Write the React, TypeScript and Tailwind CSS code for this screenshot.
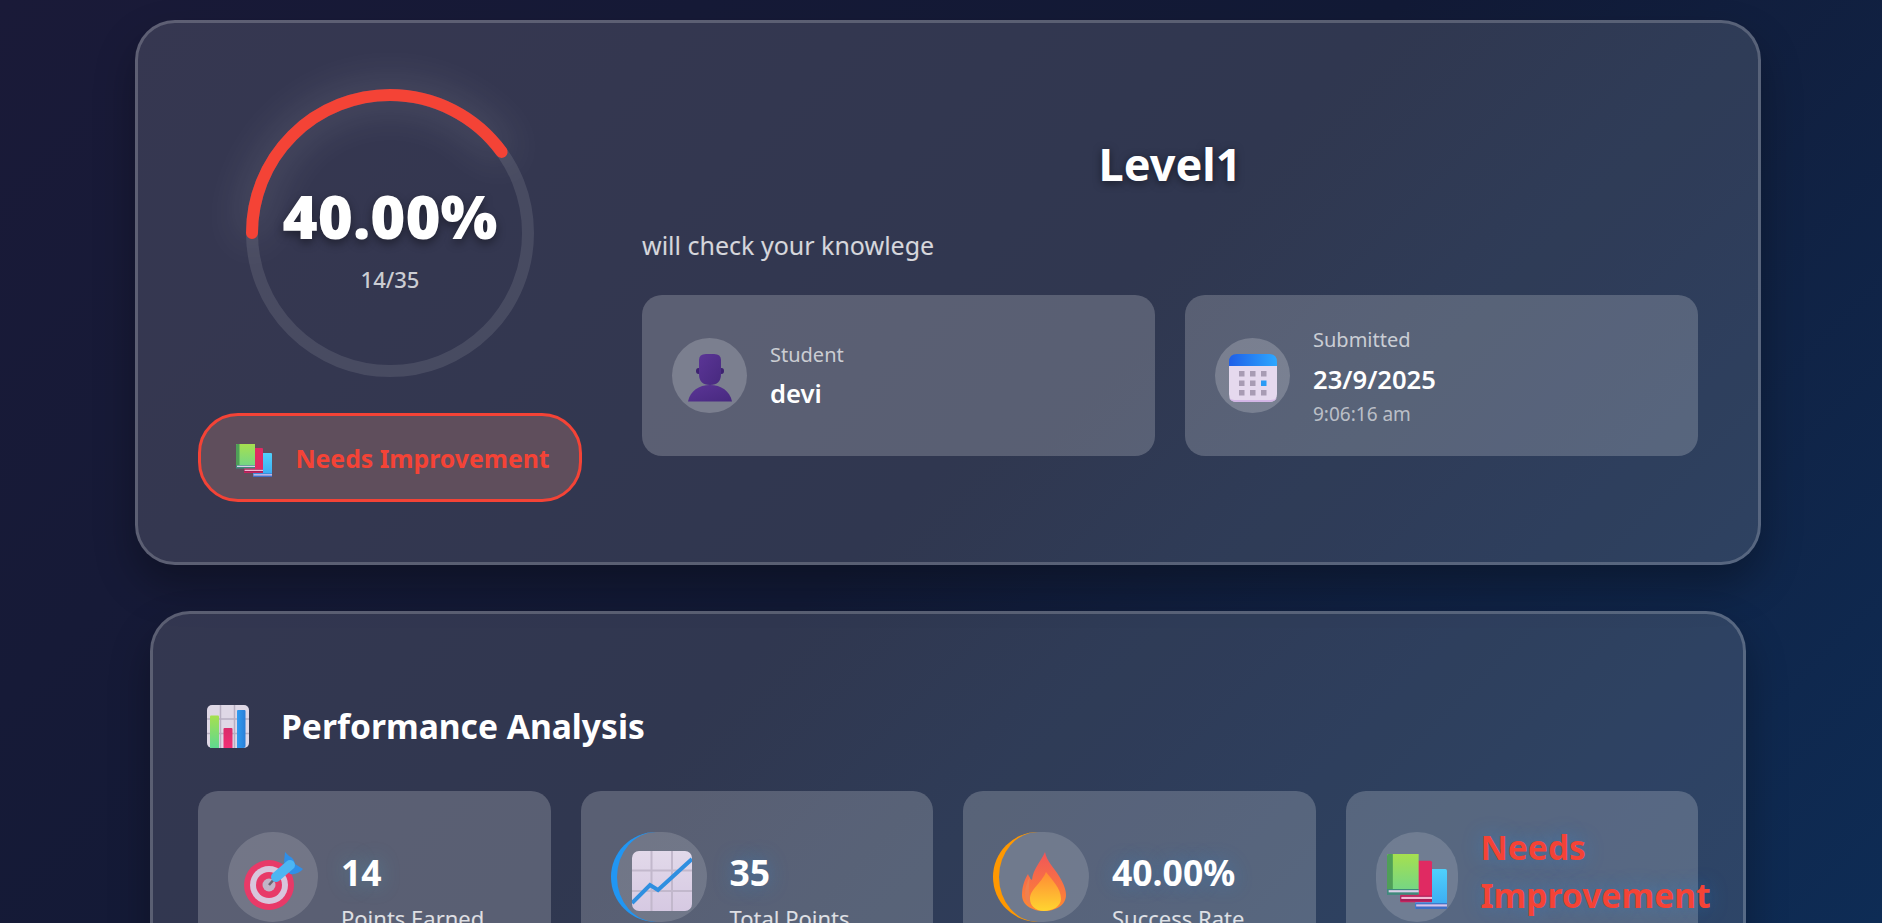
import React from 'react';

const BooksIcon: React.FC<{ id: string; className?: string }> = ({ id, className }) => (
    <svg viewBox="0 0 36 33" className={className}>
        <defs>
            <linearGradient id={`${id}-g`} x1="0" y1="0" x2="0" y2="1">
                <stop offset="0" stopColor="#a6e04f" />
                <stop offset="1" stopColor="#6fd58a" />
            </linearGradient>
            <linearGradient id={`${id}-b`} x1="0" y1="0" x2="0" y2="1">
                <stop offset="0" stopColor="#4fd0fb" />
                <stop offset="1" stopColor="#3aa8f2" />
            </linearGradient>
        </defs>
        <path d="M17 9.500q0-.5.5-.5H35q1 0 1 1V33H17z" fill={`url(#${id}-b)`} />
        <rect x="17" y="29.500" width="19" height="3.500" fill="#3f6fc4" />
        <rect x="17.500" y="30.200" width="18.500" height="1.300" fill="#d9c4ea" />
        <path d="M8 4h18q1 0 1 1v24H8z" fill="#e02a62" />
        <rect x="8" y="25" width="19" height="3.500" fill="#a81f58" />
        <rect x="8.600" y="25.700" width="18.400" height="1.300" fill="#f3b9d3" />
        <path d="M1 0h18v24H0V1q0-1 1-1z" fill={`url(#${id}-g)`} />
        <path d="M1 0h2.500v21H0V1q0-1 1-1z" fill="#4f9f58" />
        <rect x="0" y="21" width="19" height="3.500" fill="#3f8a7c" />
        <rect x="1" y="21.700" width="18" height="1.300" fill="#d9cfe8" />
    </svg>
);

const PersonIcon = () => (
    <svg viewBox="0 0 44 48" className="w-[44px] h-[48px]">
        <defs>
            <linearGradient id="person" x1="0" y1="0" x2="1" y2="1">
                <stop offset="0" stopColor="#5b3596" />
                <stop offset="1" stopColor="#47297f" />
            </linearGradient>
        </defs>
        <ellipse cx="10.500" cy="17" rx="2.500" ry="3" fill="#3d2270" />
        <ellipse cx="33.500" cy="17" rx="2.500" ry="3" fill="#3d2270" />
        <path d="M11 6q0-6 7-6h8q7 0 7 6v14q0 11-11 11T11 20z" fill="url(#person)" />
        <path d="M0 47.500C2 37 11 31 22 31s20 6 22 16.500z" fill="url(#person)" />
    </svg>
);

const CalendarIcon = () => (
    <svg viewBox="0 0 48 48" className="w-[48px] h-[48px]">
        <defs>
            <linearGradient id="calTop" x1="0" y1="0" x2="1" y2="0">
                <stop offset="0" stopColor="#1f5fe8" />
                <stop offset="1" stopColor="#2ea8ff" />
            </linearGradient>
        </defs>
        <path d="M0 11h48v29q0 8-8 8H8q-8 0-8-8z" fill="#e5d9ee" />
        <path d="M0 44q2 4 8 4h32q6 0 8-4-2 2-8 2H8q-6 0-8-2z" fill="#d3b6e6" />
        <path d="M0 12V8q0-8 8-8h32q8 0 8 8v4z" fill="url(#calTop)" />
        {[0, 1, 2].flatMap(row => [0, 1, 2].map(col => (
            <rect key={`${row}-${col}`} x={10 + col * 11} y={17 + row * 9.500} width="5.500" height="5.500" fill={row === 1 && col === 2 ? '#2b9bf5' : '#a89cb4'} />
        )))}
    </svg>
);

const ChartIcon = () => (
    <svg viewBox="0 0 42 43" className="w-[42px] h-[43px]">
        <defs>
            <linearGradient id="barG" x1="0" y1="0" x2="0" y2="1"><stop offset="0" stopColor="#a6e04f" /><stop offset="1" stopColor="#5fd890" /></linearGradient>
            <linearGradient id="barR" x1="0" y1="0" x2="0" y2="1"><stop offset="0" stopColor="#d92c6a" /><stop offset="1" stopColor="#f22f75" /></linearGradient>
            <linearGradient id="barB" x1="0" y1="0" x2="1" y2="0"><stop offset="0" stopColor="#2f9bf0" /><stop offset="1" stopColor="#2a7fd8" /></linearGradient>
        </defs>
        <rect width="42" height="43" rx="5" fill="#dfd8e6" />
        <path d="M13.500 0v43M27.500 0v43M0 14h42M0 28.500h42" stroke="#b8afc2" strokeWidth="1.500" />
        <path d="M3 11.500q0-1 1-1h7q1 0 1 1V43H3z" fill="url(#barG)" />
        <path d="M16.500 24q0-1 1-1h7q1 0 1 1v19h-9z" fill="url(#barR)" />
        <path d="M30 6q0-1 1-1h6.500q1 0 1 1v35q0 2-2 2H30z" fill="url(#barB)" />
    </svg>
);

const TargetIcon = () => (
    <svg viewBox="0 0 59 58" className="w-[59px] h-[58px]">
        <circle cx="25" cy="33" r="25" fill="#e83a68" />
        <circle cx="25" cy="33" r="19" fill="#d8c6dc" />
        <circle cx="25" cy="33" r="13" fill="#e83a68" />
        <circle cx="25" cy="33" r="6.500" fill="#c2b4c8" />
        <path d="M25 33l7-8" stroke="#6c6472" strokeWidth="2.500" />
        <path d="M41 0l4 4q5 2 6 8l8 5q-5 6-13 5L40 10z" fill="#2f8fe8" />
        <path d="M32 25l14-12" stroke="#4db6f2" strokeWidth="10" strokeLinecap="round" />
    </svg>
);

const GrowthIcon = () => (
    <svg viewBox="0 0 60 60" className="w-[60px] h-[60px]">
        <defs>
            <linearGradient id="grow" x1="0" y1="0" x2="0" y2="1"><stop offset="0" stopColor="#e2d9ea" /><stop offset="1" stopColor="#d6c9e2" /></linearGradient>
        </defs>
        <rect width="60" height="60" rx="7" fill="url(#grow)" />
        <path d="M19.500 0v60M40 0v60M0 19.500h60M0 40h60" stroke="#c2b8cc" strokeWidth="2" />
        <path d="M0 52l18-18 8 5L60 8" fill="none" stroke="#2f8fe0" strokeWidth="4" />
    </svg>
);

const FireIcon = () => (
    <svg viewBox="0 0 44 59" className="w-[44px] h-[59px]">
        <defs>
            <linearGradient id="fireOut" x1="0" y1="0" x2="0" y2="1"><stop offset="0" stopColor="#f0555a" /><stop offset="1" stopColor="#ff8a30" /></linearGradient>
            <linearGradient id="fireIn" x1="0" y1="0" x2="0" y2="1"><stop offset="0" stopColor="#ff8a35" /><stop offset="1" stopColor="#ffd530" /></linearGradient>
        </defs>
        <path d="M23 0c2 10 8 14 14 24 5 8 7 14 7 19 0 10-10 16-22 16S0 53 0 43c0-8 2-14 6-21 1 3 2 5 4 6C11 17 18 11 23 0z" fill="url(#fireOut)" />
        <path d="M8 24c-3 6-5 12-5 18 0 6 3 10 7 13-3-7-4-19-2-31z" fill="#f0804f" />
        <path d="M24 20c6 8 15 16 15 27 0 7-8 12-17 12S8 53 8 47c0-10 11-15 16-27z" fill="url(#fireIn)" />
    </svg>
);

const InfoCard: React.FC<{ icon: React.ReactNode; children: React.ReactNode }> = ({ icon, children }) => (
    <div className="flex items-center gap-[23px] h-[161px] px-[30px] rounded-[20px] bg-white/20">
        <div className="flex items-center justify-center w-[75px] h-[75px] pt-[5px] shrink-0 rounded-full bg-white/20">{icon}</div>
        <div>{children}</div>
    </div>
);

const StatCard: React.FC<{ icon: React.ReactNode; iconClass: string; children: React.ReactNode }> = ({ icon, iconClass, children }) => (
    <div className="flex items-start h-[172px] pl-[30px] pt-[41px] rounded-[20px] bg-white/20">
        <div className={`flex items-center justify-center h-[90px] pt-[8px] shrink-0 rounded-full bg-white/15 ${iconClass}`}>{icon}</div>
        {children}
    </div>
);

const StatValue: React.FC<{ value: string; label: string; glow: string }> = ({ value, label, glow }) => (
    <div className="ml-[23px] mt-[16px]">
        <div className={`text-[35.500px] leading-[48px] font-bold text-white ${glow}`}>{value}</div>
        <div className="mt-[6px] text-[22px] leading-[32px] text-white/80">{label}</div>
    </div>
);

export default function App() {
    return (
        <div className="h-[923px] overflow-hidden bg-[linear-gradient(135deg,#1a1a38_0%,#121a36_50%,#0e2c55_100%)] font-['Noto_Sans',sans-serif]">
            <div className="flex flex-col items-center w-[1896px] pt-[20px]">
                <div className="flex gap-[60px] w-[1626px] h-[545px] p-[60px] rounded-[40px] border-[3px] border-white/20 bg-white/[0.13] shadow-[0_20px_40px_rgba(0,0,0,0.3)]">
                    <div className="flex flex-col items-center w-[384px] shrink-0">
                        <div className="relative w-[300px] h-[300px]">
                            <svg viewBox="0 0 300 300" className="w-[300px] h-[300px] rotate-180 overflow-visible">
                                <circle cx="150" cy="150" r="138" fill="none" stroke="rgba(255,255,255,0.1)" strokeWidth="12" />
                                <circle cx="150" cy="150" r="138" fill="none" stroke="#f44336" strokeWidth="12" strokeLinecap="round" strokeDasharray="346.8 867" pathLength="867" className="drop-shadow-[0_0_20px_rgba(255,255,255,0.25)]" />
                            </svg>
                            <div className="absolute inset-0 flex flex-col items-center justify-center">
                                <div className="mt-[3px] text-[60px] leading-[80px] font-black text-white [text-shadow:0_4px_10px_rgba(0,0,0,0.4)]">40.00%</div>
                                <div className="mt-[8px] text-[22px] leading-[30px] font-medium text-white/75">14/35</div>
                            </div>
                        </div>
                        <div className="flex items-center justify-center gap-[23px] w-[384px] h-[91px] mt-[30px] pl-[6px] rounded-[40px] border-[3px] border-[#f44336] bg-[#5f4e5c]">
                            <BooksIcon id="badge" className="w-[36px] h-[33px] mt-[5px]" />
                            <span className="pt-[2px] text-[24.800px] font-bold text-[#f44336]">Needs Improvement</span>
                        </div>
                    </div>
                    <div className="flex flex-col justify-center flex-1 min-w-0 pt-[1px]">
                        <h1 className="h-[68px] text-center text-[45px] leading-[68px] font-bold text-white [text-shadow:0_2px_8px_rgba(0,0,0,0.5)]">Level1</h1>
                        <p className="mt-[30px] h-[34px] text-[25px] leading-[34px] text-white/80">will check your knowlege</p>
                        <div className="grid grid-cols-2 gap-[30px] mt-[33px]">
                            <InfoCard icon={<PersonIcon />}>
                                <div className="text-[20px] leading-[30px] text-white/70">Student</div>
                                <div className="mt-[7px] text-[25.600px] leading-[34px] font-semibold text-white">devi</div>
                            </InfoCard>
                            <InfoCard icon={<CalendarIcon />}>
                                <div className="text-[20px] leading-[30px] text-white/70">Submitted</div>
                                <div className="mt-[8px] text-[25.600px] leading-[34px] font-semibold text-white">23/9/2025</div>
                                <div className="mt-[4px] text-[19px] leading-[26px] text-white/60">9:06:16 am</div>
                            </InfoCard>
                        </div>
                    </div>
                </div>

                <div className="w-[1596px] h-[500px] shrink-0 mt-[46px] px-[45px] pt-[90px] rounded-[40px] border-[3px] border-white/20 bg-white/[0.13] shadow-[0_20px_40px_rgba(0,0,0,0.3)]">
                    <div className="flex items-center gap-[32px] ml-[9px] h-[44px]">
                        <ChartIcon />
                        <h2 className="text-[33.600px] leading-[44px] font-bold text-white">Performance Analysis</h2>
                    </div>
                    <div className="grid grid-cols-4 gap-[30px] mt-[43px]">
                        <StatCard icon={<TargetIcon />} iconClass="w-[90px]">
                            <StatValue value="14" label="Points Earned" glow="[text-shadow:0_0_20px_rgba(76,175,200,0.4)]" />
                        </StatCard>
                        <StatCard icon={<GrowthIcon />} iconClass="w-[96px] border-l-[6px] border-[#2196f3]">
                            <StatValue value="35" label="Total Points" glow="[text-shadow:0_0_20px_rgba(33,150,243,0.4)]" />
                        </StatCard>
                        <StatCard icon={<FireIcon />} iconClass="w-[96px] border-l-[6px] border-[#ff9800]">
                            <StatValue value="40.00%" label="Success Rate" glow="[text-shadow:0_0_20px_rgba(33,150,243,0.3)]" />
                        </StatCard>
                        <StatCard icon={<BooksIcon id="stat" className="w-[60px] h-[55px]" />} iconClass="w-[82px]">
                            <div className="ml-[23px] mt-[-9px] text-[33.600px] leading-[48px] font-bold text-[#f44336] [text-shadow:0_0_20px_rgba(33,150,243,0.4)]">
                                Needs Improvement
                            </div>
                        </StatCard>
                    </div>
                </div>
            </div>
        </div>
    );
}
